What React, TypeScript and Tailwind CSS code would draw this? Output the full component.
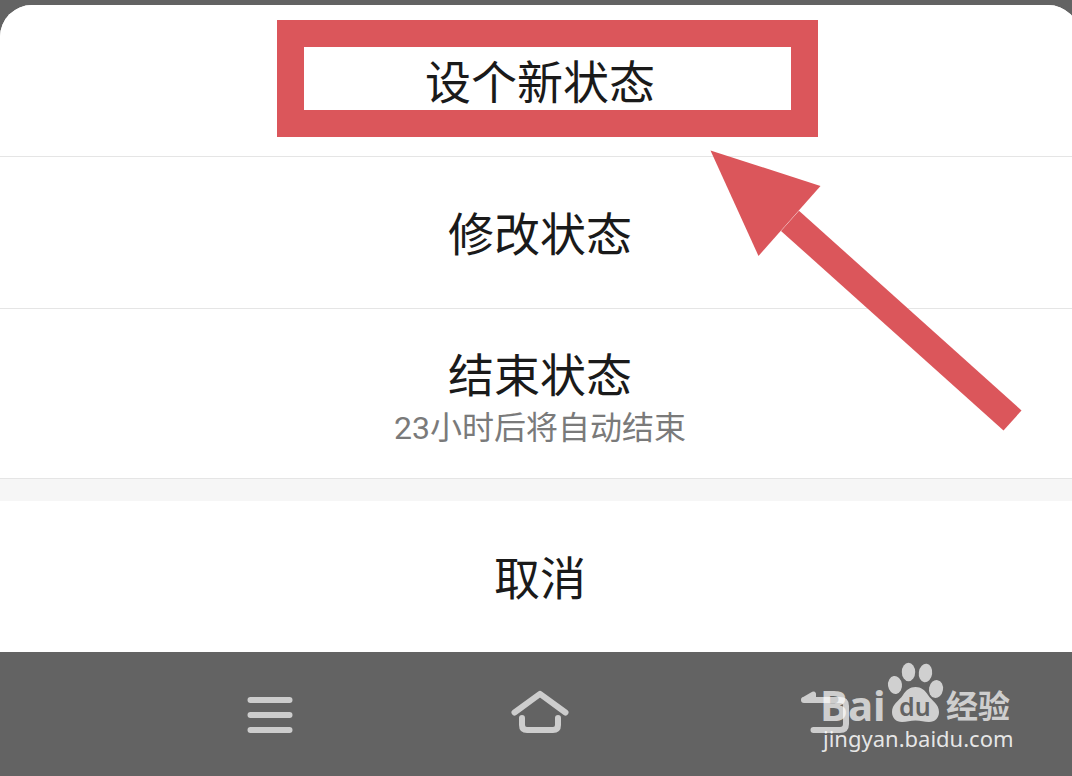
import type { ReactNode } from 'react'

type Action = {
  label: string
  hint?: string
  highlighted?: boolean
}

const actions: Action[] = [
  { label: '设个新状态', highlighted: true },
  { label: '修改状态' },
  { label: '结束状态', hint: '23小时后将自动结束' },
]

function SheetButton({ label, hint, children }: { label: string; hint?: string; children?: ReactNode }) {
  return (
    <button
      type="button"
      className={`relative flex w-full flex-col items-center justify-center bg-white text-[46px] leading-[56px] text-[#1a1a1a] ${
        hint ? 'h-[169px] pt-3' : 'h-[151px] pt-1'
      }`}
    >
      <span>{label}</span>
      {hint && <span className="text-[32px] leading-[48px] text-[#7a7a7a]">{hint}</span>}
      {children}
    </button>
  )
}

// 指向第一项的箭头
function PointerArrow() {
  return (
    <svg
      className="pointer-events-none absolute left-[710px] top-[145px] h-[282px] w-[312px] text-[#db565b]"
      viewBox="0 0 312 282"
      fill="currentColor"
      aria-hidden="true"
    >
      <path d="M0.5 0.5 110.5 36 48.5 106Z" />
      <path d="M89 60.700 311.5 260.5 293.5 280.5 71 80.900Z" />
    </svg>
  )
}

function MenuIcon() {
  return (
    <svg width="48" height="48" viewBox="0 0 48 48" fill="none" stroke="currentColor" strokeWidth="6" strokeLinecap="round">
      <path d="M4.500 10H43.500M4.500 25H43.500M4.500 40H43.500" />
    </svg>
  )
}

function HomeIcon() {
  return (
    <svg width="60" height="48" viewBox="0 0 60 48" fill="none" stroke="currentColor" strokeWidth="6" strokeLinecap="round" strokeLinejoin="round">
      <path d="M4.500 22.500 30 3.800 55.500 22.500" />
      <path d="M12 28V35Q12 40 17 40H43Q48 40 48 35V28" />
    </svg>
  )
}

function BackIcon() {
  return (
    <svg width="56" height="48" viewBox="0 0 56 48" fill="none" stroke="currentColor" strokeWidth="6" strokeLinecap="round" strokeLinejoin="round">
      <path d="M10 10H46Q52 10 52 16V34Q52 40 46 40H19.500" />
      <path d="M10 9.500 19.500 4V9.500Z" strokeWidth="5" fill="currentColor" />
    </svg>
  )
}

function Watermark() {
  return (
    <svg
      className="pointer-events-none absolute right-12 top-1 h-[104px] w-[212px]"
      viewBox="0 0 212 104"
      fill="#fff"
      fillOpacity="0.7"
      role="img"
      aria-label="Baidu 经验"
    >
      <text x="0" y="65" className="font-['Noto_Sans',sans-serif] text-[42px] font-bold">Bai</text>
      <ellipse cx="75" cy="29" rx="7" ry="9" transform="rotate(-8 75 29)" />
      <ellipse cx="88.500" cy="16" rx="6.700" ry="9.300" />
      <ellipse cx="105.500" cy="17" rx="6.700" ry="9.300" transform="rotate(8 105.500 17)" />
      <ellipse cx="116" cy="33" rx="7" ry="9" transform="rotate(10 116 33)" />
      <path d="M95.500 31C101 31 105 34 108 39C112 45 119 48 119 56C119 62 115 66 109 66C104 66 101 64.500 95.500 64.500C90 64.500 87 66 82 66C76 66 72 62 72 56C72 48 79 45 83 39C86 34 90 31 95.500 31Z" />
      <text x="79" y="60" fill="#636363" fillOpacity="1" className="font-['Noto_Sans',sans-serif] text-[25px] font-semibold">du</text>
      <text x="126" y="62" className="font-['Noto_Sans_CJK_SC',sans-serif] text-[32px] font-bold">经验</text>
      <text x="3" y="91" fillOpacity="0.85" className="font-['Noto_Sans',sans-serif] text-[22px]">jingyan.baidu.com</text>
    </svg>
  )
}

export default function App() {
  return (
    <div className="flex min-h-screen flex-col overflow-hidden bg-[#636363] pt-[5px] font-[Roboto,'Noto_Sans_CJK_SC',sans-serif]">
      {/* 底部弹出菜单 */}
      <main className="relative -mr-2">
        <div className="overflow-hidden rounded-t-[32px] bg-[#f6f6f6]">
          {actions.map((action) => (
            <div key={action.label} className="border-b border-[#e5e5e5]">
              <SheetButton label={action.label} hint={action.hint}>
                {action.highlighted && (
                  <span className="pointer-events-none absolute left-[277px] top-[15px] h-[117px] w-[541px] border-[27px] border-[#db565b]" />
                )}
              </SheetButton>
            </div>
          ))}
          <div className="h-[22px]" />
        </div>
        <SheetButton label="取消" />
        <PointerArrow />
      </main>

      {/* 系统导航栏 */}
      <nav className="relative -mr-2 flex h-[124px] items-center justify-center gap-[200px] text-[#cdcdcd]">
        <button type="button" aria-label="最近任务" className="flex w-20 justify-center">
          <MenuIcon />
        </button>
        <button type="button" aria-label="主页">
          <HomeIcon />
        </button>
        <button type="button" aria-label="返回" className="flex w-20 justify-end">
          <BackIcon />
        </button>
        <Watermark />
      </nav>
    </div>
  )
}
